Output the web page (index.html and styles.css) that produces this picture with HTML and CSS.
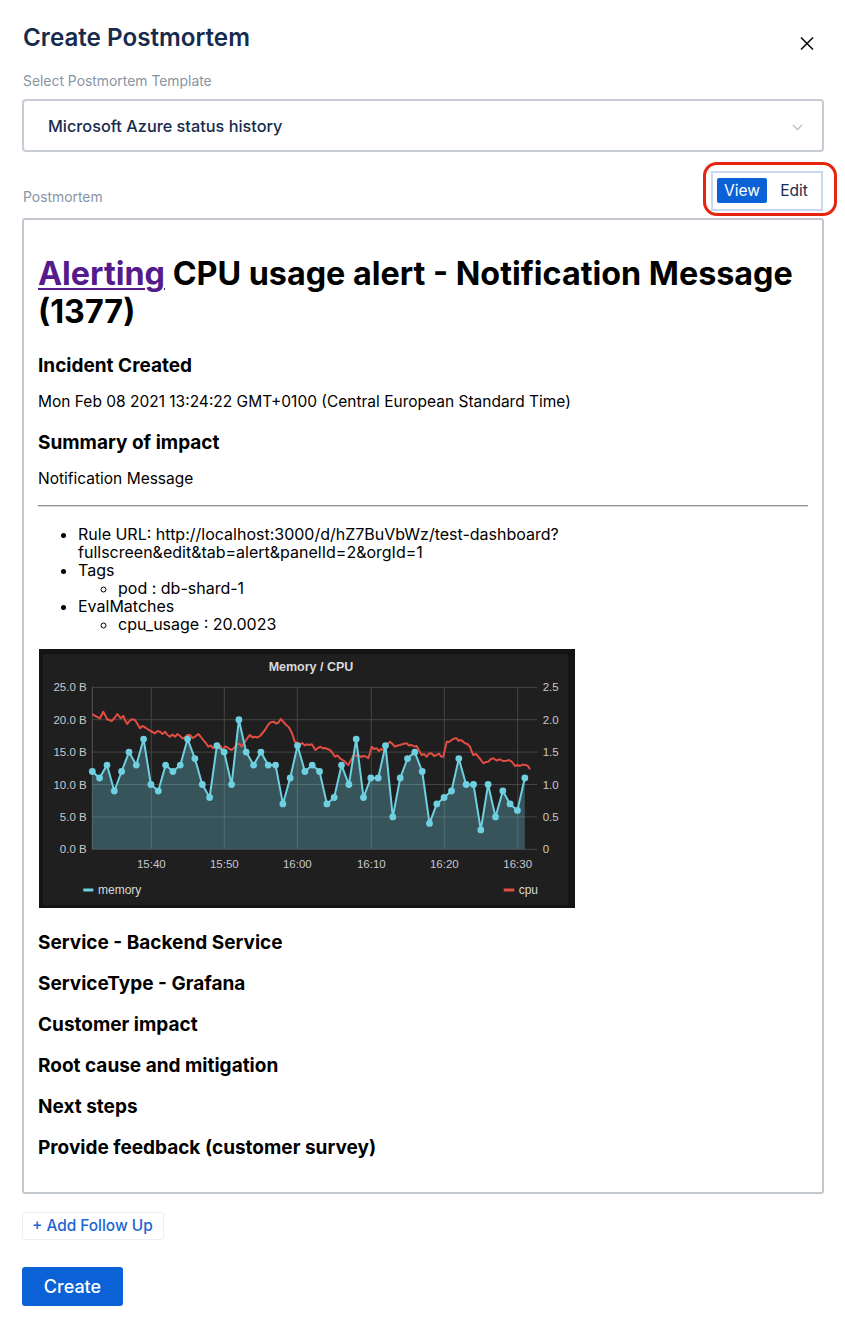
FILE: index.html
```html
<!DOCTYPE html>
<html lang="en">
<head>
<meta charset="utf-8">
<title>Create Postmortem</title>
<link rel="stylesheet" href="styles.css">
</head>
<body>
<div class="page">
  <header class="modal-header">
    <h2 class="modal-title">Create Postmortem</h2>
    <button class="close-btn" aria-label="Close">
      <svg width="14" height="13" viewBox="0 0 14 13"><path d="M1.5 1 L12.5 12 M12.5 1 L1.5 12" stroke="#111" stroke-width="1.7" fill="none" stroke-linecap="round"/></svg>
    </button>
  </header>

  <label class="field-label field-label--top">Select Postmortem Template</label>
  <div class="select">
    <span class="select-value">Microsoft Azure status history</span>
    <svg class="chevron" width="11" height="7" viewBox="0 0 11 7"><path d="M1 1 L5.5 5.5 L10 1" stroke="#b7bdc8" stroke-width="1.3" fill="none"/></svg>
  </div>

  <div class="pm-row">
    <span class="field-label field-label--pm">Postmortem</span>
    <div class="toggle-wrap">
      <div class="toggle">
        <button class="tg-btn tg-btn--view">View</button>
        <button class="tg-btn tg-btn--edit">Edit</button>
      </div>
      <span class="ring"></span>
    </div>
  </div>

  <div class="doc">
    <h1 class="doc-title"><a class="doc-link" href="#">Alerting</a> <span>CPU usage alert - Notification Message</span> <span>(1377)</span></h1>
    <h3 class="doc-h3">Incident Created</h3>
    <p class="doc-p">Mon Feb 08 2021 13:24:22 GMT+0100 (Central European Standard Time)</p>
    <h3 class="doc-h3">Summary of impact</h3>
    <p class="doc-p doc-p--last">Notification Message</p>
    <hr class="doc-hr">
    <ul class="doc-list">
      <li>Rule URL: http://localhost:3000/d/hZ7BuVbWz/test-dashboard?fullscreen&amp;edit&amp;tab=alert&amp;panelId=2&amp;orgId=1</li>
      <li>Tags
        <ul class="doc-sublist"><li>pod : db-shard-1</li></ul>
      </li>
      <li>EvalMatches
        <ul class="doc-sublist"><li>cpu_usage : 20.0023</li></ul>
      </li>
    </ul>

    <svg class="chart" width="536" height="259" viewBox="0 0 536 259">
      <rect x="0" y="0" width="536" height="259" fill="#141414"/>
      <rect x="4" y="5" width="525" height="251" fill="#1f1f20"/>
      <text x="272" y="21.7" class="ch-title" text-anchor="middle">Memory / CPU</text>
      <g stroke="#454545" stroke-width="1">
        <line x1="53" y1="38.3" x2="498" y2="38.3"/>
        <line x1="53" y1="70.7" x2="498" y2="70.7"/>
        <line x1="53" y1="103.1" x2="498" y2="103.1"/>
        <line x1="53" y1="135.5" x2="498" y2="135.5"/>
        <line x1="53" y1="167.9" x2="498" y2="167.9"/>
        <line x1="53" y1="200.3" x2="498" y2="200.3"/>
        <line x1="112.3" y1="38" x2="112.3" y2="200.3"/>
        <line x1="185.3" y1="38" x2="185.3" y2="200.3"/>
        <line x1="258.3" y1="38" x2="258.3" y2="200.3"/>
        <line x1="332.3" y1="38" x2="332.3" y2="200.3"/>
        <line x1="405.3" y1="38" x2="405.3" y2="200.3"/>
        <line x1="478.7" y1="38" x2="478.7" y2="200.3"/>
      </g>
      <line x1="53.3" y1="38" x2="53.3" y2="200.3" stroke="#555" stroke-width="1"/>
      <g class="ch-axis" text-anchor="end">
        <text x="47.7" y="42.3">25.0 B</text>
        <text x="47.7" y="74.7">20.0 B</text>
        <text x="47.7" y="107.1">15.0 B</text>
        <text x="47.7" y="139.5">10.0 B</text>
        <text x="47.7" y="171.9">5.0 B</text>
        <text x="47.7" y="204.3">0.0 B</text>
      </g>
      <g class="ch-axis">
        <text x="503.7" y="42.3">2.5</text>
        <text x="503.7" y="74.7">2.0</text>
        <text x="503.7" y="107.1">1.5</text>
        <text x="503.7" y="139.5">1.0</text>
        <text x="503.7" y="171.9">0.5</text>
        <text x="503.7" y="204.3">0</text>
      </g>
      <g class="ch-axis" text-anchor="middle">
        <text x="112.3" y="219">15:40</text>
        <text x="185.3" y="219">15:50</text>
        <text x="258.3" y="219">16:00</text>
        <text x="332.3" y="219">16:10</text>
        <text x="405.3" y="219">16:20</text>
        <text x="478.7" y="219">16:30</text>
      </g>
      <polygon fill="rgba(110,208,224,0.3)" points="53.3,122.5 60.6,129 68,116.1 75.3,142 82.6,122.5 90,103.1 97.3,116.1 104.6,90.1 111.9,135.5 119.3,142 126.6,116.1 133.9,122.5 141.3,116.1 148.6,90.1 155.9,109.6 163.3,135.5 170.6,148.5 177.9,96.6 185.2,103.1 192.6,135.5 199.9,70.7 207.2,103.1 214.6,116.1 221.9,103.1 229.2,116.1 236.6,116.1 243.9,154.9 251.2,129 258.5,96.6 265.9,122.5 273.2,116.1 280.5,122.5 287.9,154.9 295.2,148.5 302.5,116.1 309.9,135.5 317.2,90.1 324.5,148.5 331.8,129 339.2,129 346.5,96.6 353.8,167.9 361.2,129 368.5,109.6 375.8,103.1 383.2,122.5 390.5,174.4 397.8,154.9 405.1,148.5 412.5,142 419.8,109.6 427.1,135.5 434.5,135.5 441.8,180.9 449.1,135.5 456.5,167.9 463.8,142 471.1,154.9 478.4,161.4 485.8,129 485.8,200.3 53.3,200.3"/>
      <polyline fill="none" stroke="#e24d42" stroke-width="2" stroke-linejoin="round" points="53.3,65 55.5,66.5 57.7,67.7 61,69.3 64.3,62.7 66,66 68.3,70.3 72.7,72 75.5,69 78.3,65 81.7,69.3 84.3,67 86,71 88.3,75 90.5,72 92.7,70.3 96,71 98.5,75 101,79.3 103.5,77 106,78.3 108.5,80 111,81.7 113.5,83 116,84.3 118.5,82 121,82.7 123.5,85 126,82.7 128.5,86 131,87.7 133.5,85.5 136,87.7 138.5,85 141,87 143.5,89.5 146,88.3 148.5,86 151,86 153.5,89 156,87.7 159.3,85 161.5,87.5 164.3,91 166.8,94 169.3,97.7 171.8,96.5 174.3,99.3 176.8,97 179.3,98.3 181.5,96.8 183.7,101 186,97.5 188.3,98.3 190.5,100 192.7,101 195,99 197.7,96 200.2,94.5 202.7,97.7 204.3,95 206,92.7 208.5,89 211,86 213.5,88.5 216,87.7 218.5,88.5 221,87 223.5,84 226,81 228,77.5 230.3,74.3 232.5,73 235,72.7 237,74.5 239.3,73.7 241.7,70 244.5,73 247.1,76 249.7,78 252.3,82.7 254,87 255.7,92.7 258.3,94 260.9,95.3 263.5,94 265.5,96.5 267.8,95.3 270.3,96 272.9,95.3 274.6,98 276.4,101 279,99 281.5,97.7 284,99.5 286,99 288.5,100 291,101 293.5,104 296,107.7 298.5,106.5 301,109.3 303.5,111 306,112.7 307.5,114.5 309.3,116 312,111 314.3,107 317,106.5 319.3,106 322,108 324.3,107 327,107.5 329.3,109.3 331,104 332.7,97.7 335,100 337.7,99.3 340,102 342,100 344.3,101 347.5,96 351,92.7 353.5,95 356,97.7 358.5,96.5 361,96 364,95 367.7,94.3 370,96.5 372.7,96 375,97.5 377.7,97 380,101.5 382.7,106 385,105 387.7,107.7 390,104.5 392.7,104.3 395,107 397.7,106 400,104.5 402,107.5 404.3,107.7 406,100 407.7,92.7 410,93 412.7,91 415,89.5 417.7,89.3 419.5,92 421,91 423.5,92 426,94.3 428.5,95 431,97.7 432.5,102 434.3,106 437,105 439.3,107.7 442,111 444.3,114.3 447,113 449.3,112.7 452,110 454.3,109.3 457.5,111.5 461,110.3 464,112 467.7,111.7 470,111 472.7,112.7 474.5,115 476,117 478.5,116 481,117 483.5,115.5 486,116 488.5,116.5 490,118.5 491,120.3"/>
      <polyline fill="none" stroke="#6ed0e0" stroke-width="2" stroke-linejoin="round" points="53.3,122.5 60.6,129 68,116.1 75.3,142 82.6,122.5 90,103.1 97.3,116.1 104.6,90.1 111.9,135.5 119.3,142 126.6,116.1 133.9,122.5 141.3,116.1 148.6,90.1 155.9,109.6 163.3,135.5 170.6,148.5 177.9,96.6 185.2,103.1 192.6,135.5 199.9,70.7 207.2,103.1 214.6,116.1 221.9,103.1 229.2,116.1 236.6,116.1 243.9,154.9 251.2,129 258.5,96.6 265.9,122.5 273.2,116.1 280.5,122.5 287.9,154.9 295.2,148.5 302.5,116.1 309.9,135.5 317.2,90.1 324.5,148.5 331.8,129 339.2,129 346.5,96.6 353.8,167.9 361.2,129 368.5,109.6 375.8,103.1 383.2,122.5 390.5,174.4 397.8,154.9 405.1,148.5 412.5,142 419.8,109.6 427.1,135.5 434.5,135.5 441.8,180.9 449.1,135.5 456.5,167.9 463.8,142 471.1,154.9 478.4,161.4 485.8,129"/>
      <g fill="#6ed0e0">
        <circle cx="53.3" cy="122.5" r="3.4"/><circle cx="60.6" cy="129" r="3.4"/><circle cx="68" cy="116.1" r="3.4"/><circle cx="75.3" cy="142" r="3.4"/><circle cx="82.6" cy="122.5" r="3.4"/><circle cx="90" cy="103.1" r="3.4"/><circle cx="97.3" cy="116.1" r="3.4"/><circle cx="104.6" cy="90.1" r="3.4"/><circle cx="111.9" cy="135.5" r="3.4"/><circle cx="119.3" cy="142" r="3.4"/>
        <circle cx="126.6" cy="116.1" r="3.4"/><circle cx="133.9" cy="122.5" r="3.4"/><circle cx="141.3" cy="116.1" r="3.4"/><circle cx="148.6" cy="90.1" r="3.4"/><circle cx="155.9" cy="109.6" r="3.4"/><circle cx="163.3" cy="135.5" r="3.4"/><circle cx="170.6" cy="148.5" r="3.4"/><circle cx="177.9" cy="96.6" r="3.4"/><circle cx="185.2" cy="103.1" r="3.4"/><circle cx="192.6" cy="135.5" r="3.4"/>
        <circle cx="199.9" cy="70.7" r="3.4"/><circle cx="207.2" cy="103.1" r="3.4"/><circle cx="214.6" cy="116.1" r="3.4"/><circle cx="221.9" cy="103.1" r="3.4"/><circle cx="229.2" cy="116.1" r="3.4"/><circle cx="236.6" cy="116.1" r="3.4"/><circle cx="243.9" cy="154.9" r="3.4"/><circle cx="251.2" cy="129" r="3.4"/><circle cx="258.5" cy="96.6" r="3.4"/><circle cx="265.9" cy="122.5" r="3.4"/>
        <circle cx="273.2" cy="116.1" r="3.4"/><circle cx="280.5" cy="122.5" r="3.4"/><circle cx="287.9" cy="154.9" r="3.4"/><circle cx="295.2" cy="148.5" r="3.4"/><circle cx="302.5" cy="116.1" r="3.4"/><circle cx="309.9" cy="135.5" r="3.4"/><circle cx="317.2" cy="90.1" r="3.4"/><circle cx="324.5" cy="148.5" r="3.4"/><circle cx="331.8" cy="129" r="3.4"/><circle cx="339.2" cy="129" r="3.4"/>
        <circle cx="346.5" cy="96.6" r="3.4"/><circle cx="353.8" cy="167.9" r="3.4"/><circle cx="361.2" cy="129" r="3.4"/><circle cx="368.5" cy="109.6" r="3.4"/><circle cx="375.8" cy="103.1" r="3.4"/><circle cx="383.2" cy="122.5" r="3.4"/><circle cx="390.5" cy="174.4" r="3.4"/><circle cx="397.8" cy="154.9" r="3.4"/><circle cx="405.1" cy="148.5" r="3.4"/><circle cx="412.5" cy="142" r="3.4"/>
        <circle cx="419.8" cy="109.6" r="3.4"/><circle cx="427.1" cy="135.5" r="3.4"/><circle cx="434.5" cy="135.5" r="3.4"/><circle cx="441.8" cy="180.9" r="3.4"/><circle cx="449.1" cy="135.5" r="3.4"/><circle cx="456.5" cy="167.9" r="3.4"/><circle cx="463.8" cy="142" r="3.4"/><circle cx="471.1" cy="154.9" r="3.4"/><circle cx="478.4" cy="161.4" r="3.4"/><circle cx="485.8" cy="129" r="3.4"/>
      </g>
      <rect x="44.3" y="239.5" width="10" height="3" fill="#6ed0e0"/>
      <text x="59" y="244.5" class="ch-legend">memory</text>
      <rect x="464.7" y="239.5" width="10.6" height="3" fill="#e24d42"/>
      <text x="479.7" y="244.5" class="ch-legend">cpu</text>
    </svg>

    <h3 class="doc-h3 doc-h3--after-chart">Service - Backend Service</h3>
    <h3 class="doc-h3">ServiceType - Grafana</h3>
    <h3 class="doc-h3">Customer impact</h3>
    <h3 class="doc-h3">Root cause and mitigation</h3>
    <h3 class="doc-h3">Next steps</h3>
    <h3 class="doc-h3">Provide feedback (customer survey)</h3>
  </div>

  <div class="actions">
    <button class="follow-btn">+ Add Follow Up</button>
    <button class="create-btn">Create</button>
  </div>
</div>
</body>
</html>
```
FILE: styles.css
```css
* { box-sizing: border-box; }
html, body { margin: 0; padding: 0; background: #fff; }
body {
  font-family: "Inter", "Noto Sans", sans-serif;
  color: #000;
}
.page {
  padding: 23px 21px 20px 22px;
}
.modal-header {
  display: flex;
  justify-content: space-between;
  align-items: flex-start;
}
.modal-title {
  margin: 0;
  font-size: 24.2px;
  line-height: 29px;
  font-weight: 600;
  color: #172b4d;
  padding-left: 1px;
}
.close-btn {
  margin: 14px 10px 0 0;
  padding: 0;
  border: 0;
  background: none;
  width: 14px;
  height: 13px;
  display: flex;
}
.field-label {
  display: block;
  font-size: 13.9px;
  line-height: 17px;
  color: #8993a4;
  padding-left: 1px;
}
.field-label--top { margin-top: 21px; }
.field-label--pm { margin-bottom: 5px; }
.select {
  margin-top: 9px;
  height: 53px;
  border: 2px solid #c8ccd5;
  border-radius: 4px;
  display: flex;
  align-items: center;
  justify-content: space-between;
  padding: 0 19px 0 24px;
}
.select-value {
  font-size: 16.3px;
  font-weight: 500;
  color: #172b4d;
}
.chevron { display: block; margin-top: 3px; }
.pm-row {
  margin-top: 19px;
  display: flex;
  justify-content: space-between;
  align-items: flex-end;
}
.toggle-wrap {
  position: relative;
  margin-right: 1px;
}
.toggle {
  display: flex;
  border: 2px solid #c9d9f1;
  padding: 5px 2px 6px 4px;
  background: #fff;
}
.tg-btn {
  height: 25px;
  border: 0;
  background: none;
  font-family: "Inter", sans-serif;
  font-size: 15.5px;
  padding: 0;
  border-radius: 2px;
  color: #172b4d;
}
.tg-btn--view {
  width: 50px;
  background: #0b62d6;
  color: #fff;
}
.tg-btn--edit {
  width: 52px;
  padding: 0 11px 0 13px;
}
.ring {
  position: absolute;
  top: -9px;
  bottom: -5px;
  left: -8px;
  right: -14px;
  border: 3px solid #e6240f;
  border-radius: 14px;
  pointer-events: none;
}
.doc {
  margin-top: 7px;
  border: 2px solid #c3c7cf;
  border-radius: 3px;
  padding: 14px 14px 18px 14px;
}
.doc-title {
  margin: 21px 0 24px;
  font-size: 32.3px;
  line-height: 38px;
  font-weight: 700;
  color: #000;
}
.doc-link { color: #551a8b; text-decoration: underline; text-decoration-thickness: 2px; text-underline-offset: 3px; }
.doc-h3 {
  margin: 18.9px 0 15px;
  font-size: 19px;
  line-height: 22px;
  font-weight: 700;
  color: #000;
}
.doc-h3--after-chart { margin-top: 24px; }
.doc-p {
  margin: 15px 0 21.2px;
  font-size: 15.5px;
  line-height: 19px;
  color: #000;
}
.doc-p--last { margin-bottom: 17.2px; }
.doc-hr {
  margin: 17.2px 0 18px;
  height: 0;
  border: 0;
  border-top: 1px solid #8e8e8e;
  border-bottom: 1px solid #d9d9d9;
}
.doc-list {
  margin: 18px 0 0;
  padding-left: 40px;
  font-size: 16px;
  line-height: 18px;
  list-style: disc;
}
.doc-sublist {
  margin: 0;
  padding-left: 40px;
  list-style: circle;
}
.chart {
  display: block;
  margin: 16px 0 0 1px;
}
.ch-title {
  font-family: "Liberation Sans", Arial, sans-serif;
  font-size: 12.5px;
  font-weight: 700;
  fill: #d8d9da;
}
.ch-axis text {
  font-family: "Liberation Sans", Arial, sans-serif;
  font-size: 11.5px;
  fill: #c8c9ca;
}
.ch-legend {
  font-family: "Liberation Sans", Arial, sans-serif;
  font-size: 12px;
  fill: #d8d9da;
}
.actions {
  display: flex;
  flex-direction: column;
  align-items: flex-start;
}
.follow-btn {
  margin-top: 18px;
  height: 28px;
  padding: 0 10px 0 9px;
  border: 1px solid #eceef2;
  border-radius: 3px;
  background: #fff;
  font-family: "Inter", sans-serif;
  font-size: 15.4px;
  font-weight: 500;
  color: #1b66d2;
}
.create-btn {
  margin-top: 27px;
  width: 101px;
  height: 39px;
  border: 0;
  border-radius: 3px;
  background: #0b62d6;
  color: #fff;
  font-family: "Inter", sans-serif;
  font-size: 18px;
  font-weight: 500;
}
```
